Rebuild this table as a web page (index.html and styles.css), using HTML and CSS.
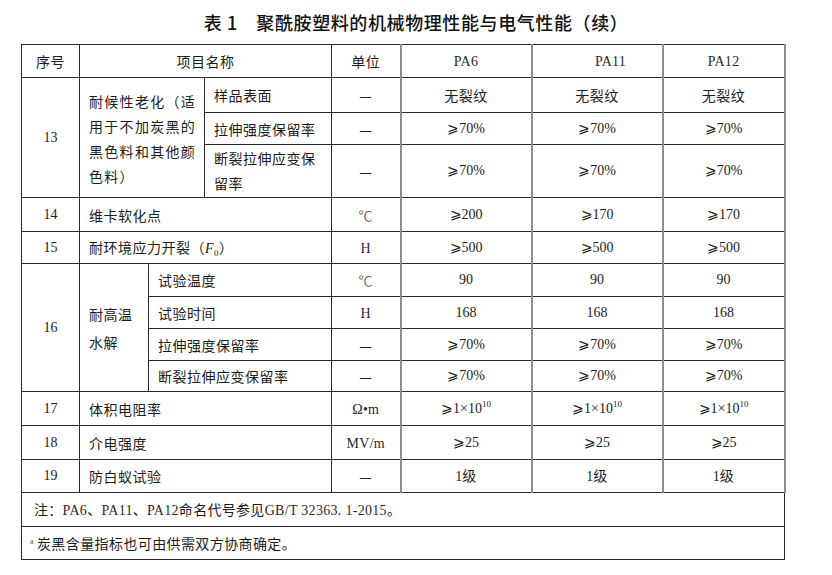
FILE: index.html
```html
<!DOCTYPE html>
<html lang="zh-CN">
<head>
<meta charset="utf-8">
<title>聚酰胺塑料的机械物理性能与电气性能</title>
<link rel="stylesheet" href="styles.css">
</head>
<body>
<h1 class="title">表 1&emsp;聚酰胺塑料的机械物理性能与电气性能（续）</h1>
<table class="spec">
  <colgroup>
    <col class="c1"><col class="c2"><col class="c3"><col class="c4"><col class="c5"><col class="c6"><col class="c7"><col class="c8">
  </colgroup>
  <tr class="h33">
    <td>序号</td>
    <td colspan="3">项目名称</td>
    <td>单位</td>
    <td class="pa"><span class="ser">PA6</span></td>
    <td class="pa"><span class="ser pa11">PA11</span></td>
    <td class="pa pr"><span class="ser">PA12</span></td>
  </tr>
  <tr class="h35">
    <td rowspan="3" class="num">13</td>
    <td rowspan="3" colspan="2" class="l wide">耐候性老化（适<br>用于不加炭黑的<br>黑色料和其他颜<br>色料）</td>
    <td class="l">样品表面</td>
    <td>—</td>
    <td class="pa">无裂纹</td>
    <td class="pa">无裂纹</td>
    <td class="pa pr">无裂纹</td>
  </tr>
  <tr class="h32">
    <td class="l">拉伸强度保留率</td>
    <td>—</td>
    <td class="pa num">⩾70%</td>
    <td class="pa num">⩾70%</td>
    <td class="pa pr num">⩾70%</td>
  </tr>
  <tr class="h53">
    <td class="l two">断裂拉伸应变保<br>留率</td>
    <td>—</td>
    <td class="pa num">⩾70%</td>
    <td class="pa num">⩾70%</td>
    <td class="pa pr num">⩾70%</td>
  </tr>
  <tr class="h34">
    <td class="num">14</td>
    <td colspan="3" class="l">维卡软化点</td>
    <td class="deg">℃</td>
    <td class="pa num">⩾200</td>
    <td class="pa num">⩾170</td>
    <td class="pa pr num">⩾170</td>
  </tr>
  <tr class="h32">
    <td class="num">15</td>
    <td colspan="3" class="l">耐环境应力开裂（<i class="f">F</i><sub class="sub0">0</sub>）</td>
    <td><span class="ser">H</span></td>
    <td class="pa num">⩾500</td>
    <td class="pa num">⩾500</td>
    <td class="pa pr num">⩾500</td>
  </tr>
  <tr class="h33">
    <td rowspan="4" class="num">16</td>
    <td rowspan="4" class="l tall">耐高温<br>水解</td>
    <td colspan="2" class="l">试验温度</td>
    <td class="deg">℃</td>
    <td class="pa num">90</td>
    <td class="pa num">90</td>
    <td class="pa pr num">90</td>
  </tr>
  <tr class="h32">
    <td colspan="2" class="l">试验时间</td>
    <td><span class="ser">H</span></td>
    <td class="pa num">168</td>
    <td class="pa num">168</td>
    <td class="pa pr num">168</td>
  </tr>
  <tr class="h32">
    <td colspan="2" class="l">拉伸强度保留率</td>
    <td>—</td>
    <td class="pa num">⩾70%</td>
    <td class="pa num">⩾70%</td>
    <td class="pa pr num">⩾70%</td>
  </tr>
  <tr class="h31">
    <td colspan="2" class="l">断裂拉伸应变保留率</td>
    <td>—</td>
    <td class="pa num">⩾70%</td>
    <td class="pa num">⩾70%</td>
    <td class="pa pr num">⩾70%</td>
  </tr>
  <tr class="h34">
    <td class="num">17</td>
    <td colspan="3" class="l">体积电阻率</td>
    <td><span class="ser">Ω•m</span></td>
    <td class="pa num">⩾1×10<sup class="exp">10</sup></td>
    <td class="pa num">⩾1×10<sup class="exp">10</sup></td>
    <td class="pa pr num">⩾1×10<sup class="exp">10</sup></td>
  </tr>
  <tr class="h34">
    <td class="num">18</td>
    <td colspan="3" class="l">介电强度</td>
    <td><span class="ser">MV/m</span></td>
    <td class="pa num">⩾25</td>
    <td class="pa num">⩾25</td>
    <td class="pa pr num">⩾25</td>
  </tr>
  <tr class="h33">
    <td class="num">19</td>
    <td colspan="3" class="l">防白蚁试验</td>
    <td>—</td>
    <td class="pa"><span class="num">1</span>级</td>
    <td class="pa"><span class="num">1</span>级</td>
    <td class="pa pr"><span class="num">1</span>级</td>
  </tr>
  <tr class="h34">
    <td colspan="8" class="l note">注：<span class="ser">PA6</span>、<span class="ser">PA11</span>、<span class="ser">PA12</span>命名代号参见<span class="ser">GB/T 32363. 1-2015</span>。</td>
  </tr>
  <tr class="h33">
    <td colspan="8" class="l foot"><sup class="fa">a</sup>炭黑含量指标也可由供需双方协商确定。</td>
  </tr>
</table>
</body>
</html>
```

FILE: styles.css
```css
body {
  margin: 0;
  background: #ffffff;
  color: #1c1c1c;
  font-family: "Noto Sans CJK SC", "Noto Sans", sans-serif;
  font-size: 14px;
}

.title {
  margin: 0 0 10px 0;
  padding-top: 10px;
  height: 24px;
  line-height: 24px;
  text-align: center;
  font-size: 18px;
  letter-spacing: 0.6px;
  font-weight: 500;
  color: #111111;
}

.spec {
  margin-left: 21px;
  border-collapse: collapse;
  table-layout: fixed;
  width: 763px;
}

.c1 { width: 58px; }
.c2 { width: 69px; }
.c3 { width: 56px; }
.c4 { width: 127px; }
.c5 { width: 69px; }
.c6 { width: 131px; }
.c7 { width: 131px; }
.c8 { width: 122px; }

.spec td {
  border: 1px solid #2a2a2a;
  padding: 0;
  text-align: center;
  vertical-align: middle;
  letter-spacing: 0.5px;
  line-height: 20px;
  white-space: nowrap;
}

.spec td.pa {
  border-left: 2px solid #8c8c8c;
}

.spec td.pr {
  border-right: 2px solid #8c8c8c;
}

.h31 { height: 31px; }
.h32 { height: 32px; }
.h33 { height: 33px; }
.h34 { height: 34px; }
.h35 { height: 35px; }
.h53 { height: 53px; }

.spec td.l {
  text-align: left;
  padding-left: 9px;
}

.spec td.wide {
  letter-spacing: 1.3px;
  line-height: 25px;
  padding-top: 3px;
}

.spec td.two {
  line-height: 25px;
}

.spec td.tall {
  line-height: 28px;
}

.num {
  font-family: "Liberation Serif", serif;
  letter-spacing: 0;
}

.spec td.num {
  letter-spacing: 0;
  font-size: 14px;
}

.spec td.deg {
  font-weight: 300;
  color: #333333;
}

.ser {
  font-family: "Liberation Serif", serif;
  letter-spacing: 0.3px;
  font-size: 14px;
  color: #2a2a2a;
}

.pa11 {
  padding-left: 27px;
}

.f {
  font-family: "Liberation Serif", serif;
  font-style: italic;
}

.sub0 {
  font-family: "Liberation Serif", serif;
  font-size: 9px;
  vertical-align: -3px;
  line-height: 0;
}

.exp {
  font-size: 9px;
  vertical-align: 6px;
  line-height: 0;
}

.spec td.note {
  padding-left: 12px;
  letter-spacing: 0.3px;
}

.spec td.foot {
  padding-left: 8px;
  letter-spacing: 0.4px;
}

.fa {
  font-family: "Liberation Serif", serif;
  font-size: 8px;
  vertical-align: 5px;
  line-height: 0;
  margin-right: 3px;
  color: #555555;
}
```
